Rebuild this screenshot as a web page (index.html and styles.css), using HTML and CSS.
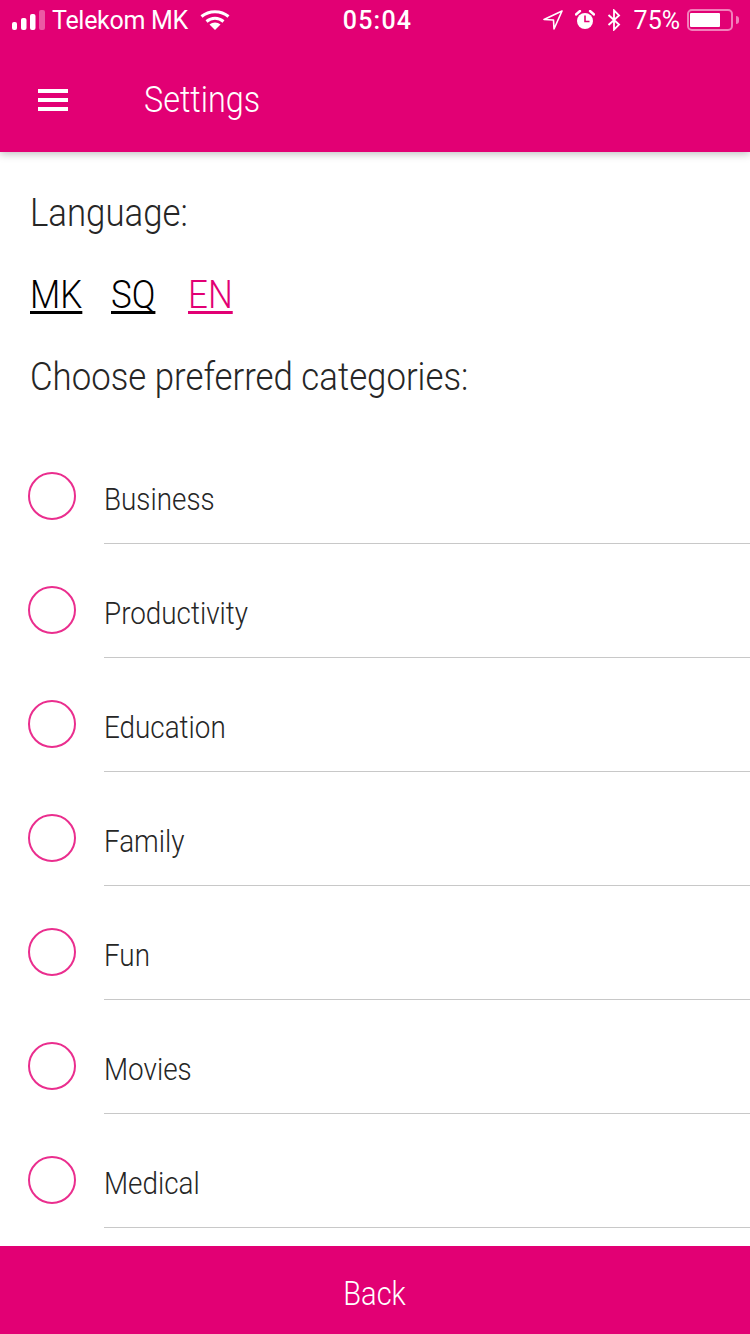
FILE: index.html
```html
<!DOCTYPE html>
<html lang="en">
<head>
    <meta charset="UTF-8">
    <meta name="viewport" content="width=device-width, initial-scale=1.0">
    <title>Settings</title>
    <link rel="stylesheet" href="styles.css">
</head>
<body>
    <div class="app">
        <header class="top-bar">
            <div class="status-bar">
                <div class="status-left">
                    <svg class="signal" width="33" height="20" viewBox="0 0 33 20">
                        <rect x="0" y="12" width="5" height="8" rx="2" fill="#fff"/>
                        <rect x="9" y="8" width="5.500" height="12" rx="2" fill="#fff"/>
                        <rect x="18" y="4" width="5.500" height="16" rx="2" fill="#fff"/>
                        <rect x="27" y="0" width="6" height="20" rx="2" fill="#fff" opacity="0.35"/>
                    </svg>
                    <span class="carrier">Telekom MK</span>
                    <svg class="wifi" width="30" height="20" viewBox="0 0 30 20">
                        <path d="M1.500 6.500C9 0 21 0 28.500 6.500" fill="none" stroke="#fff" stroke-width="3"/>
                        <path d="M6.500 11.500C11.500 7.300 18.500 7.300 23.500 11.500" fill="none" stroke="#fff" stroke-width="3"/>
                        <path d="M9.500 14.500C12.500 11.700 17.500 11.700 20.500 14.500L15 20Z" fill="#fff"/>
                    </svg>
                </div>
                <div class="status-time">05:04</div>
                <div class="status-right">
                    <svg width="20" height="20" viewBox="0 0 20 20">
                        <path d="M19 1L1 9.500L10.500 10L11 19Z" fill="none" stroke="#fff" stroke-width="1.600" stroke-linejoin="round"/>
                    </svg>
                    <svg width="20" height="20" viewBox="0 0 20 20">
                        <circle cx="10" cy="11" r="8" fill="#fff"/>
                        <path d="M10 5.500V11.500H14.500" fill="none" stroke="#e20074" stroke-width="1.600"/>
                        <path d="M1 4.500L5 1M19 4.500L15 1" stroke="#fff" stroke-width="2.400" stroke-linecap="round"/>
                    </svg>
                    <svg width="14" height="22" viewBox="0 0 14 24">
                        <path d="M1 6.500L12.500 17L7 22.500V1.500L12.500 7L1 17.500" fill="none" stroke="#fff" stroke-width="2"/>
                    </svg>
                    <span class="battery-text">75%</span>
                    <div class="battery">
                        <div class="battery-body"><div class="battery-level"></div></div>
                        <div class="battery-tip"></div>
                    </div>
                </div>
            </div>
            <div class="title-bar">
                <div class="menu-icon"><span></span><span></span><span></span></div>
                <h1>Settings</h1>
            </div>
        </header>

        <main class="content">
            <div class="heading">Language:</div>
            <div class="languages">
                <a class="lang">MK</a>
                <a class="lang">SQ</a>
                <a class="lang active">EN</a>
            </div>
            <div class="heading categories-heading">Choose preferred categories:</div>
            <ul class="categories">
                <li class="category"><div class="radio"></div><div class="category-label"><span>Business</span></div></li>
                <li class="category"><div class="radio"></div><div class="category-label"><span>Productivity</span></div></li>
                <li class="category"><div class="radio"></div><div class="category-label"><span>Education</span></div></li>
                <li class="category"><div class="radio"></div><div class="category-label"><span>Family</span></div></li>
                <li class="category"><div class="radio"></div><div class="category-label"><span>Fun</span></div></li>
                <li class="category"><div class="radio"></div><div class="category-label"><span>Movies</span></div></li>
                <li class="category"><div class="radio"></div><div class="category-label"><span>Medical</span></div></li>
            </ul>
        </main>

        <footer class="back-btn"><span>Back</span></footer>
    </div>
</body>
</html>
```

FILE: styles.css
```css
html, body {
    margin: 0;
    padding: 0;
}

body {
    font-family: Roboto, "Liberation Sans", sans-serif;
    background-color: #fff;
}

.app {
    width: 750px;
    height: 1334px;
    display: flex;
    flex-direction: column;
    overflow: hidden;
}

.top-bar {
    height: 152px;
    flex-shrink: 0;
    background-color: #e20074;
    color: #fff;
    box-shadow: 0 2px 8px rgba(0, 0, 0, 0.25);
    position: relative;
}

.status-bar {
    height: 40px;
    display: grid;
    grid-template-columns: 1fr auto 1fr;
    align-items: center;
    padding: 0 11px 0 12px;
}

.status-left {
    display: flex;
    align-items: center;
}

.carrier {
    font-size: 25px;
    margin-left: 7px;
    letter-spacing: -0.3px;
}

.wifi {
    margin-left: 12px;
}

.status-time {
    margin-left: 4px;
    font-size: 25px;
    font-weight: 500;
    letter-spacing: 1.2px;
}

.status-right {
    display: flex;
    align-items: center;
    justify-content: flex-end;
    gap: 12px;
}

.battery-text {
    margin-left: 1px;
    font-size: 25px;
}

.battery {
    display: flex;
    align-items: center;
    margin-left: -5px;
}

.battery-body {
    width: 46px;
    height: 22px;
    box-sizing: border-box;
    padding: 2px 1px;
    border: 2px solid rgba(255, 255, 255, 0.5);
    border-radius: 5px;
}

.battery-level {
    width: 30px;
    height: 100%;
    background-color: #fff;
    border-radius: 1px;
}

.battery-tip {
    width: 3px;
    height: 8px;
    margin-left: 3px;
    background-color: rgba(255, 255, 255, 0.5);
    border-radius: 0 3px 3px 0;
}

.title-bar {
    height: 112px;
    display: flex;
    align-items: center;
    padding-left: 38px;
    padding-top: 7px;
    box-sizing: border-box;
}

.menu-icon {
    width: 30px;
    display: flex;
    flex-direction: column;
    gap: 5px;
}

.menu-icon span {
    height: 4px;
    background-color: #fff;
}

/* the original face is narrower than Roboto, so the big text gets squeezed */
.title-bar h1 {
    margin: 0 0 0 76px;
    font-size: 37px;
    font-weight: 300;
    transform: scaleX(0.875);
    transform-origin: left;
}

.content {
    flex: 1;
    padding-top: 39px;
    overflow: hidden;
}

.heading {
    margin-left: 30px;
    font-size: 38px;
    line-height: 44px;
    font-weight: 300;
    color: #262626;
    transform: scaleX(0.915);
    transform-origin: left;
}

.languages {
    display: grid;
    grid-template-columns: 81px 77px auto;
    justify-content: start;
    margin: 38px 0 0 30px;
}

.lang {
    font-size: 38px;
    line-height: 44px;
    font-weight: 300;
    color: #000;
    text-decoration: underline;
    text-decoration-thickness: 3px;
    text-decoration-skip-ink: none;
    text-underline-offset: 3px;
    transform: scaleX(0.92);
    transform-origin: left;
}

.lang.active {
    color: #e20074;
}

.categories-heading {
    margin-top: 38px;
}

.categories {
    list-style: none;
    margin: 31px 0 0;
    padding: 0;
}

.category {
    height: 114px;
    display: flex;
    align-items: stretch;
    padding-left: 28px;
    box-sizing: border-box;
}

.radio {
    width: 48px;
    height: 48px;
    margin-top: 42px;
    flex-shrink: 0;
    box-sizing: border-box;
    border: 2px solid #ea2e8e;
    border-radius: 50%;
}

.category-label {
    flex: 1;
    margin-left: 28px;
    padding-top: 50px;
    box-sizing: border-box;
    font-size: 32px;
    line-height: 38px;
    font-weight: 300;
    color: #262626;
    border-bottom: 1px solid #c8c8c8;
}

.category-label span {
    display: inline-block;
    transform: scaleX(0.87);
    transform-origin: left;
}

.back-btn {
    height: 88px;
    flex-shrink: 0;
    padding-top: 6px;
    box-sizing: border-box;
    display: flex;
    align-items: center;
    justify-content: center;
    background-color: #e20074;
    color: #fff;
    font-size: 33px;
    font-weight: 300;
}

.back-btn span {
    transform: scaleX(0.88);
}
```
